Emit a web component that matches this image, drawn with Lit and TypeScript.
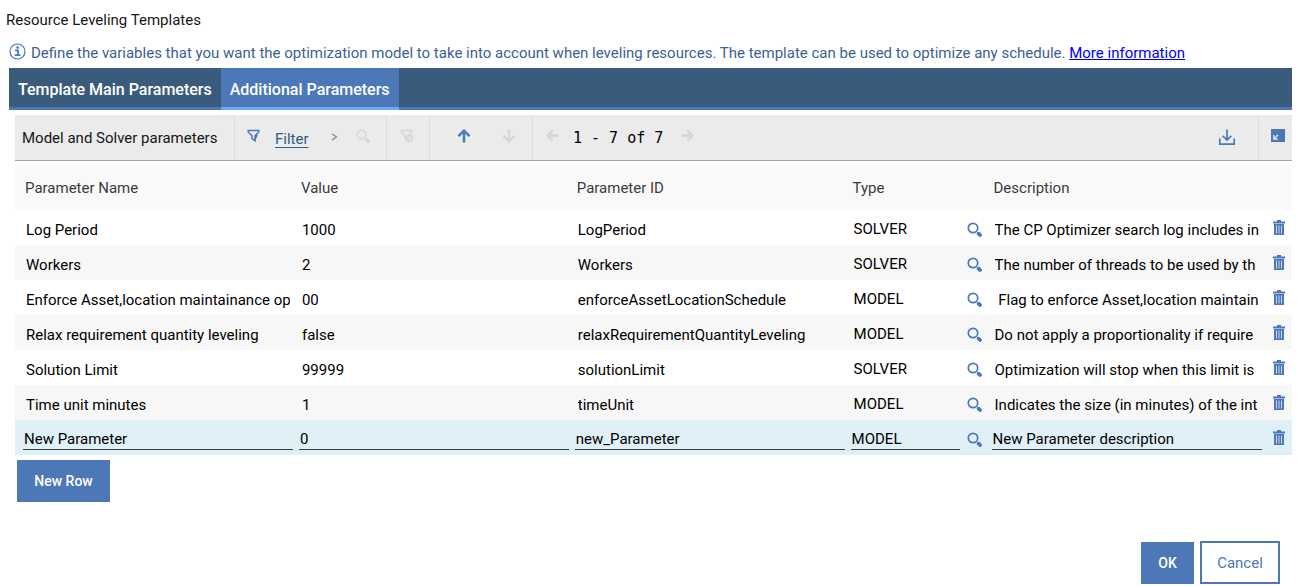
import { LitElement, html, css, svg } from "lit";
import { customElement } from "lit/decorators.js";
import { classMap } from "lit/directives/class-map.js";

interface Param {
  name: string;
  value: string;
  id: string;
  type: string;
  description: string;
  editing?: boolean;
}

const PARAMS: Param[] = [
  { name: "Log Period", value: "1000", id: "LogPeriod", type: "SOLVER", description: "The CP Optimizer search log includes in" },
  { name: "Workers", value: "2", id: "Workers", type: "SOLVER", description: "The number of threads to be used by th" },
  { name: "Enforce Asset,location maintainance op", value: "00", id: "enforceAssetLocationSchedule", type: "MODEL", description: " Flag to enforce Asset,location maintain" },
  { name: "Relax requirement quantity leveling", value: "false", id: "relaxRequirementQuantityLeveling", type: "MODEL", description: "Do not apply a proportionality if require" },
  { name: "Solution Limit", value: "99999", id: "solutionLimit", type: "SOLVER", description: "Optimization will stop when this limit is" },
  { name: "Time unit minutes", value: "1", id: "timeUnit", type: "MODEL", description: "Indicates the size (in minutes) of the int" },
  { name: "New Parameter", value: "0", id: "new_Parameter", type: "MODEL", description: "New Parameter description", editing: true },
];

const magnifier = svg`<circle cx="6" cy="6" r="4.7" fill="none" stroke="currentColor" stroke-width="1.7"/><path d="M10.4 10.4l1.2 1.2" stroke="currentColor" stroke-width="1.6"/><path d="M11.7 11.7l1.3 1.3" stroke="currentColor" stroke-width="3.8" stroke-linecap="round"/>`;
const funnel = svg`<path d="M1.2 1.5h10.6v1.4L8 6.8v5L5 9.6V6.8L1.2 2.9z" fill="none" stroke="currentColor" stroke-width="1.5"/>`;
const arrow = svg`<path d="M7 13.5V2M1.5 7.2L7 1.7l5.5 5.5" fill="none" stroke="currentColor" stroke-width="2.5"/>`;

@customElement("app-root")
export class AppRoot extends LitElement {
  static styles = css`
    :host {
      display: block;
      font: 15px/20px Roboto, sans-serif;
      color: #161616;
      background: #fff;
    }
    * { box-sizing: border-box; }
    button, input { font: inherit; color: inherit; margin: 0; border: 0; border-radius: 0; padding: 0; background: none; }
    button { cursor: pointer; }
    svg { display: block; }
    h1 { font: inherit; margin: 0; padding: 10px 6px 0; }
    .intro { display: flex; align-items: center; gap: 5px; margin: 12px 0 0; padding-left: 9px; height: 26px; padding-bottom: 4px; color: #3d5f94; white-space: nowrap; }
    .intro svg { color: #4178be; margin-bottom: 3px; }
    .intro a { color: #0000ee; }
    .tabs { display: flex; height: 42px; margin: 0 10px 0 9px; background: #3b5b7c; }
    .tab { padding: 5px 9px 0; border-bottom: 3px solid #4d78b8; color: #fff; font-size: 16px; font-weight: 500; white-space: nowrap; }
    .tab.active { background: #4d78b8; border-bottom-color: #6ba8f5; }
    .rest { flex: 1; border-bottom: 3px solid #4d78b8; }
    .panel { margin: 5px 10px 0 15px; }
    .toolbar { display: flex; height: 46px; background: #ebebeb; border-bottom: 1px solid #a6a6a6; }
    .toolbar h2 { font: inherit; margin: 0; padding: 13px 7px 0; width: 219px; white-space: nowrap; }
    .group { display: flex; border-left: 1px solid #dedede; color: #4d78b8; }
    .group > * { height: 45px; display: flex; align-items: center; }
    .filter { width: 152px; padding-left: 12px; }
    .filter .link { color: #325c80; padding: 3px 0 0 15px; text-decoration: underline; text-underline-offset: 3px; width: 67px; white-space: nowrap; }
    .chevron { padding: 0 0 2px 4px; width: 29px; color: #8c8c84; }
    .raised { padding-bottom: 4px; }
    .off { color: #d6d6d6; }
    .clear { width: 43px; padding-right: 3px; justify-content: center; }
    .step { width: 103px; padding: 0 16px 0 27px; justify-content: space-between; }
    .step button { padding-bottom: 4px; }
    .pager { padding-left: 13px; gap: 14px; }
    .pager .range { font: 15px/20px "DejaVu Sans Mono", monospace; color: #000; white-space: pre; }
    .pager > :last-child { padding-left: 4px; }
    .download { margin-left: auto; width: 40px; height: 45px; color: #4d78b8; }
    .expand { width: 34px; padding-left: 12px; }
    .expand button { padding-bottom: 4px; }
    .down { transform: rotate(180deg); }
    .left { transform: rotate(-90deg); }
    .right { transform: rotate(90deg); }
    table { width: 100%; margin-top: 4px; border-collapse: collapse; table-layout: fixed; }
    .c-name { width: 22%; }
    .c-mid { width: 21.6%; }
    .c-type { width: 9%; }
    .c-icon { width: 26px; }
    .c-del { width: 27px; }
    th { height: 45px; padding: 0 5px; text-align: left; font-weight: 400; background: #f9f9f9; color: #3c3c3b; white-space: nowrap; }
    th:first-child { padding-left: 10px; }
    td { height: 35px; padding: 0 3px; vertical-align: middle; }
    td:first-child { padding-left: 8px; }
    tbody tr:nth-child(even) { background: #f7f7f7; }
    tbody tr.editing { background: #dff0f7; }
    td input { display: block; width: 100%; height: 24px; padding: 4px 2px 0; color: #000; outline: 0; border: solid transparent; border-width: 0 1px; }
    td.type input { padding-top: 2px; }
    .editing td input, .editing td.type input { border: 0; border-bottom: 1px solid #3c3c3b; padding: 4px 1px 0; }
    td.icon { color: #4d78b8; padding: 0; }
    td.icon button { display: block; padding: 3px 0 0 4px; }
    td.del button { padding: 0 0 1px 8px; }
    .primary, .secondary { height: 42px; font-size: 14px; white-space: nowrap; }
    .primary { background: #4d78b8; color: #fff; font-weight: 500; }
    .secondary { height: 43px; border: 2px solid #4d78b8; color: #4d78b8; background: #fff; width: 80px; font-size: 15px; }
    .add { display: block; width: 93px; margin: 5px 0 0 2px; }
    footer { display: flex; justify-content: flex-end; align-items: flex-end; gap: 6px; padding: 39px 22px 2px 0; }
    footer .primary { width: 53px; }
  `;

  private cell(p: Param, label: string, value: string, cls = "") {
    return html`<td class=${cls}><input type="text" aria-label=${label + ", " + p.name} .value=${value} ?readonly=${!p.editing} /></td>`;
  }

  private row(p: Param) {
    return html`
      <tr class=${classMap({ editing: !!p.editing })}>
        ${this.cell(p, "Parameter Name", p.name)}
        ${this.cell(p, "Value", p.value)}
        ${this.cell(p, "Parameter ID", p.id)}
        ${this.cell(p, "Type", p.type, "type")}
        <td class="icon">
          <button aria-label="Select type"><svg width="15" height="15" viewBox="0 0 15 15">${magnifier}</svg></button>
        </td>
        ${this.cell(p, "Description", p.description)}
        <td class="icon del">
          <button aria-label="Delete row">
            <svg width="12" height="15" viewBox="0 0 12 15">
              <path d="M4 0h4v1.5h4v2H0v-2h4zM1 4h10v11H1z" fill="currentColor" />
              <path d="M3.5 5.5v8M6 5.5v8M8.5 5.5v8" stroke="#c8d6ea" stroke-width="1" />
            </svg>
          </button>
        </td>
      </tr>
    `;
  }

  render() {
    return html`
      <h1>Resource Leveling Templates</h1>
      <p class="intro">
        <svg width="17" height="17" viewBox="0 0 17 17">
          <circle cx="8.5" cy="8.5" r="7.5" fill="none" stroke="currentColor" stroke-width="1.2" />
          <path d="M6 7.4h3v4.4M5.7 12.1h5.8" fill="none" stroke="currentColor" stroke-width="1.8" />
          <circle cx="8.6" cy="4.6" r="1.3" fill="currentColor" />
        </svg>
        <span>Define the variables that you want the optimization model to take into account when leveling resources. The template can be used to optimize any schedule. <a href="#info">More information</a></span>
      </p>
      <div class="tabs" role="tablist">
        <button class="tab" role="tab" aria-selected="false">Template Main Parameters</button>
        <button class="tab active" role="tab" aria-selected="true">Additional Parameters</button>
        <div class="rest"></div>
      </div>
      <main class="panel">
        <div class="toolbar">
          <h2>Model and Solver parameters</h2>
          <div class="group filter">
            <button class="raised" aria-label="Filter table"><svg width="13" height="13" viewBox="0 0 13 13">${funnel}<path d="M8 6.5l3-2.5-1 4-2 4z" fill="currentColor"/></svg></button>
            <a class="link" href="#filter">Filter</a>
            <span class="chevron"><svg width="7" height="8" viewBox="0 0 7 8"><path d="M1 .8L5.4 4 1 7.2" fill="none" stroke="currentColor" stroke-width="1.4"/></svg></span>
            <button class="off raised" aria-label="Find"><svg width="14" height="14" viewBox="0 0 15 15">${magnifier}</svg></button>
          </div>
          <div class="group clear off">
            <button class="raised off" aria-label="Clear filter"><svg width="14" height="13" viewBox="0 0 14 13">${funnel}<circle cx="9.5" cy="9" r="3" fill="#ebebeb" stroke="currentColor" stroke-width="1.4"/><path d="M7 11.5L12 6" stroke="currentColor" stroke-width="1.2"/></svg></button>
          </div>
          <div class="group step">
            <button aria-label="Previous row"><svg width="14" height="14" viewBox="0 0 14 14">${arrow}</svg></button>
            <button class="off" aria-label="Next row"><svg class="down" width="14" height="14" viewBox="0 0 14 14">${arrow}</svg></button>
          </div>
          <div class="group pager">
            <button class="off raised" aria-label="Previous page"><svg class="left" width="13" height="13" viewBox="0 0 14 14">${arrow}</svg></button>
            <span class="range">1 - 7 of 7</span>
            <button class="off raised" aria-label="Next page"><svg class="right" width="13" height="13" viewBox="0 0 14 14">${arrow}</svg></button>
          </div>
          <button class="download" aria-label="Download">
            <svg width="18" height="17" viewBox="0 0 18 17">
              <path d="M1.8 9.5v5.7h14.4V9.5M9 .5v10.3M4.7 6.8L9 11l4.3-4.2" fill="none" stroke="currentColor" stroke-width="1.7" />
            </svg>
          </button>
          <div class="group expand">
            <button aria-label="Toggle table size">
              <svg width="14" height="13" viewBox="0 0 14 13">
                <rect width="14" height="13" fill="#4d78b8" />
                <path d="M2.8 6v4h4M3 9.8l4-4" fill="none" stroke="#dbe5f3" stroke-width="1.4" />
              </svg>
            </button>
          </div>
        </div>
        <table>
          <colgroup>
            <col class="c-name" /><col class="c-mid" /><col class="c-mid" /><col class="c-type" /><col class="c-icon" /><col /><col class="c-del" />
          </colgroup>
          <thead>
            <tr>
              <th>Parameter Name</th><th>Value</th><th>Parameter ID</th><th>Type</th><th></th><th>Description</th><th></th>
            </tr>
          </thead>
          <tbody>${PARAMS.map((p) => this.row(p))}</tbody>
        </table>
        <button class="primary add">New Row</button>
      </main>
      <footer>
        <button class="primary">OK</button>
        <button class="secondary">Cancel</button>
      </footer>
    `;
  }
}
